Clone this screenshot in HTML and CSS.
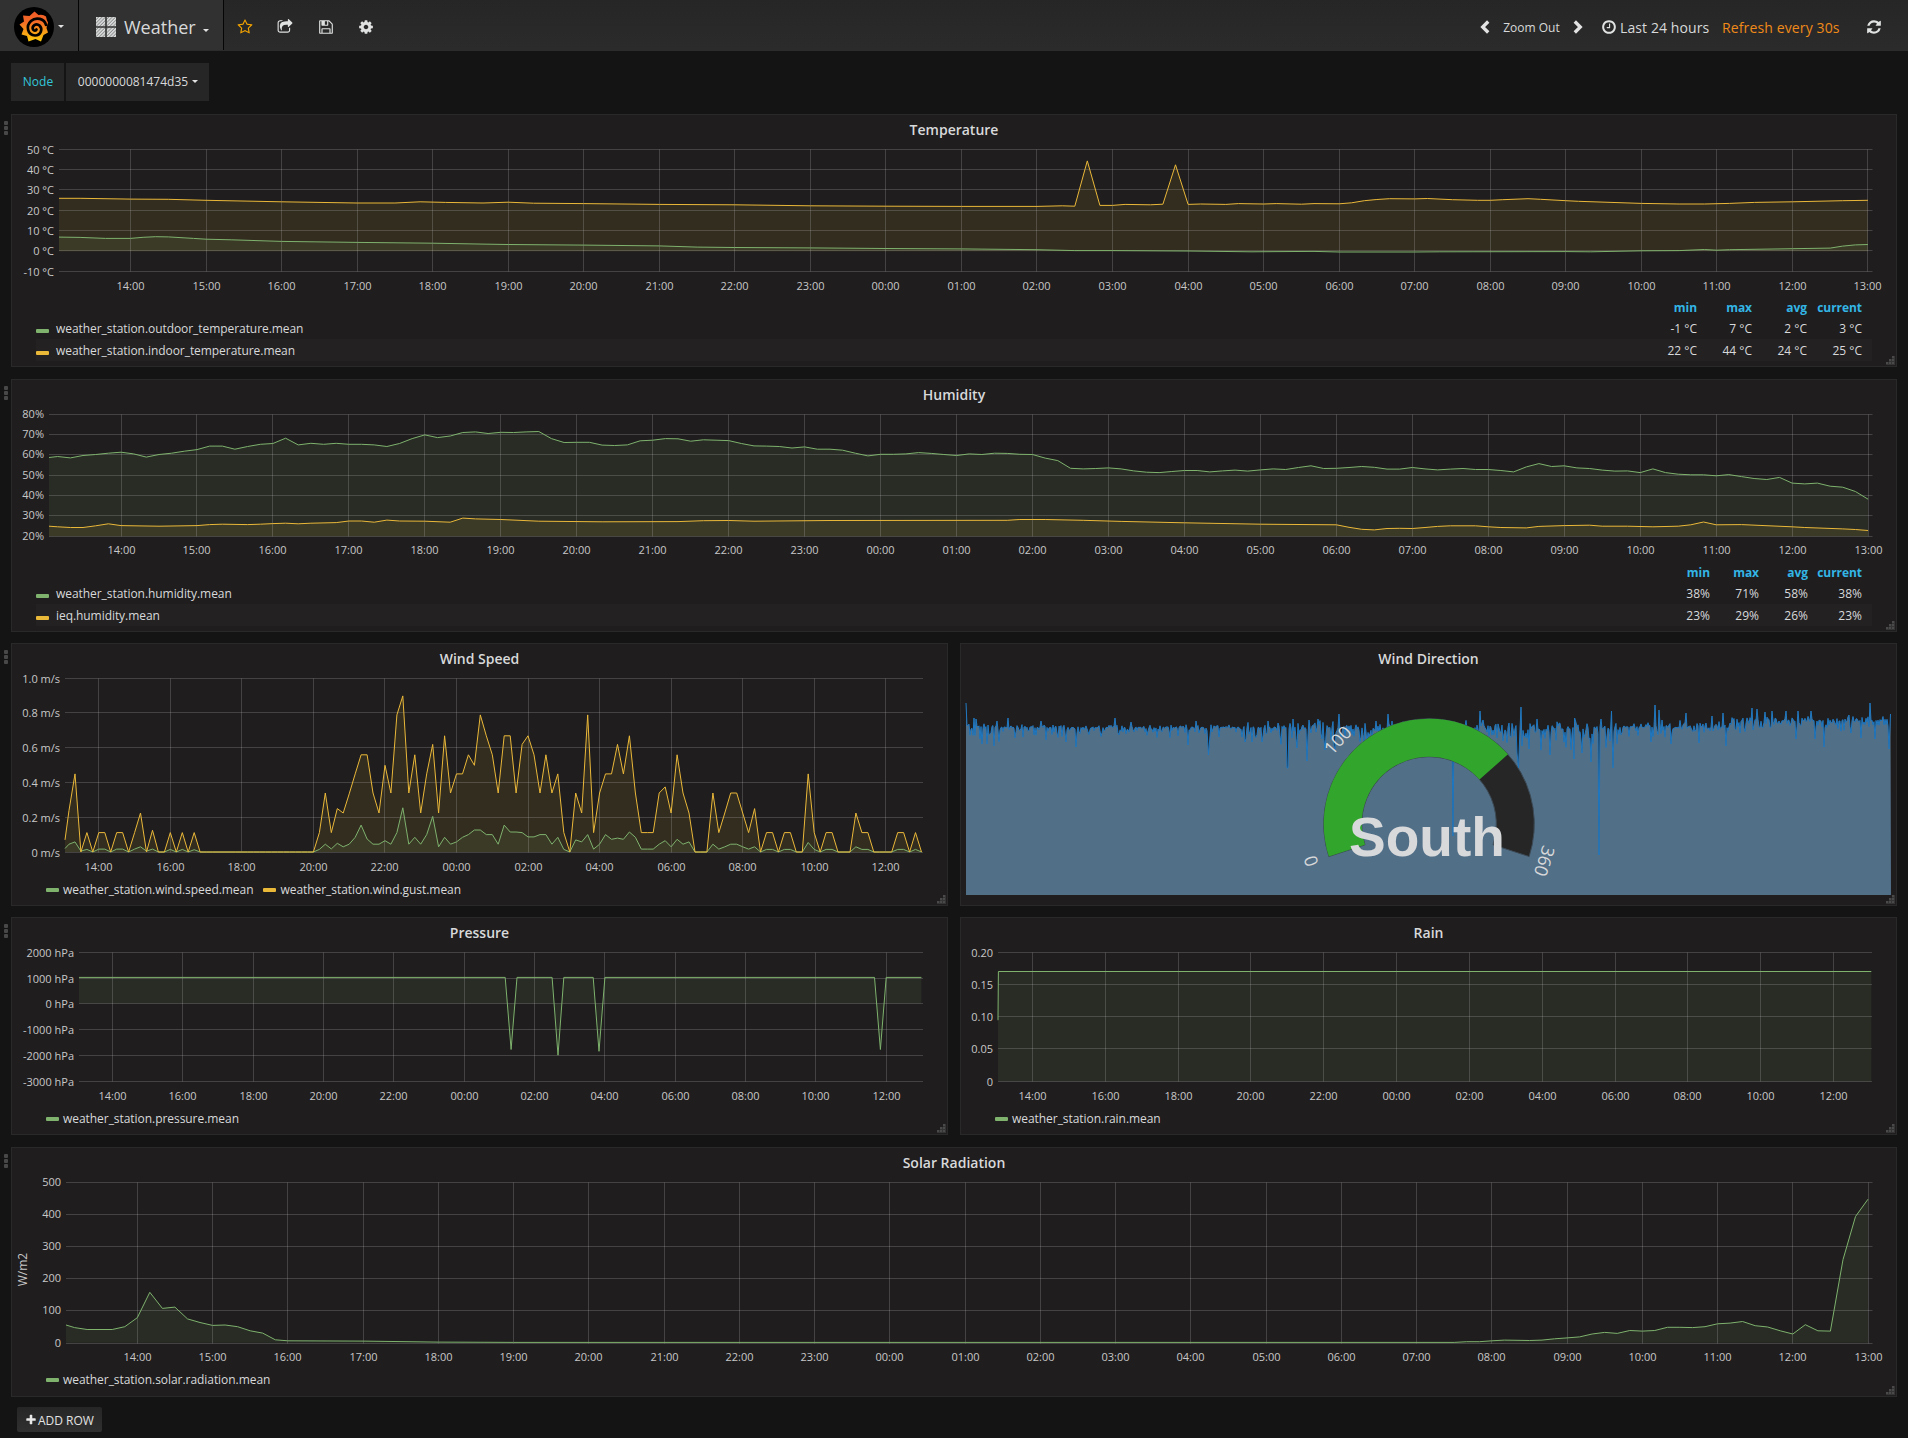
FILE: index.html
```html
<!DOCTYPE html>
<html lang="en">
<head>
<meta charset="utf-8">
<title>Grafana - Weather</title>
<link rel="stylesheet" href="styles.css">
</head>
<body>
<header class="navbar">
  <div class="brand">
    <svg class="logo" width="40" height="40" viewBox="0 0 40 40">
      <defs><linearGradient id="flame" x1="0" y1="0" x2="0" y2="1"><stop offset="0" stop-color="#f05a28"/><stop offset=".35" stop-color="#f26b26"/><stop offset="1" stop-color="#fbca0a"/></linearGradient></defs>
      <circle cx="20" cy="20" r="20" fill="#000"/>
      <path fill="url(#flame)" d="M20.500 4.500L24.500 8Q29 7 32 9.500Q32.500 13 34 15.500Q33 18.500 32.500 21L34 25.500L29.500 28L27 34.500L21.500 32L14.500 34.500L13 29L7.500 27.500L9.500 22L5.500 17.500L10 14.500L9 8.500L15.500 9Z"/>
      <path fill="none" stroke="#000" stroke-width="2.700" stroke-linecap="round" d="M32 18C30.500 11.500 22 9.500 17 14C11.500 19 13.500 28 21 28.500C27 28.500 29 22 25.500 18.500C22 15.500 17.500 19 19 22.500C20 24 22 24 22.500 22.500"/>
    </svg>
    <i class="caret"></i>
  </div>
  <div class="dash-picker">
    <svg width="20" height="20" viewBox="0 0 20 20">
      <defs><pattern id="hatch" width="2.400" height="2.400" patternUnits="userSpaceOnUse" patternTransform="rotate(45)"><rect width="2.400" height="2.400" fill="#8d8f90"/><rect width="1.400" height="2.400" fill="#dfe0e0"/></pattern></defs>
      <path fill="url(#hatch)" d="M0 0h9.200v9.200H0zM10.800 0H20v9.200h-9.200zM0 10.800h9.200V20H0zM10.800 10.800H20V20h-9.200z"/>
    </svg>
    <span class="dash-name">Weather</span><i class="caret"></i>
  </div>
  <nav class="tools">
    <svg class="star" viewBox="0 0 1792 1792"><path d="M1201 1004l306-297-422-62-189-382-189 382-422 62 306 297-73 421 378-199 377 199zm527-357q0 22-26 48l-363 354 86 500q1 7 1 20 0 50-41 50-19 0-40-12l-449-236-449 236q-22 12-40 12-21 0-31.500-14.500t-10.500-35.500q0-6 2-20l86-500-364-354q-25-27-25-48 0-37 56-46l502-73 225-455q19-41 49-41t49 41l225 455 502 73q56 9 56 46z"/></svg>
    <svg viewBox="0 0 1792 1792"><path d="M1472 989v259q0 119-84.500 203.500t-203.500 84.500h-832q-119 0-203.500-84.500t-84.500-203.500v-832q0-119 84.500-203.500t203.500-84.500h255q13 0 22.500 9.500t9.500 22.500q0 27-26 32-77 26-133 60-10 4-16 4h-112q-66 0-113 47t-47 113v832q0 66 47 113t113 47h832q66 0 113-47t47-113v-214q0-19 18-29 28-13 54-37 16-16 35-8 21 9 21 29zm237-496l-384 384q-18 19-45 19-12 0-25-5-39-17-39-59v-192h-160q-323 0-438 131-119 137-74 473 3 23-20 34-8 2-12 2-16 0-26-13-10-14-21-31t-39.500-68.500-49.500-99.500-38.500-114-17.500-122q0-49 3.500-91t14-90 28-88 47-81.500 68.500-74 94.500-61.500 124.500-48.500 159.500-30.500 196.500-11h160v-192q0-42 39-59 13-5 25-5 26 0 45 19l384 384q19 19 19 45t-19 45z"/></svg>
    <svg viewBox="0 0 1792 1792"><path d="M512 1536h768v-384h-768v384zm896 0h128v-896q0-14-10-38.500t-20-34.500l-281-281q-10-10-34-20t-39-10v416q0 40-28 68t-68 28h-576q-40 0-68-28t-28-68v-416h-128v1280h128v-416q0-40 28-68t68-28h832q40 0 68 28t28 68v416zm-384-928v-320q0-13-9.500-22.500t-22.500-9.500h-192q-13 0-22.500 9.500t-9.500 22.500v320q0 13 9.500 22.500t22.500 9.500h192q13 0 22.500-9.500t9.500-22.500zm640 32v928q0 40-28 68t-68 28h-1344q-40 0-68-28t-28-68v-1344q0-40 28-68t68-28h928q40 0 88 20t76 48l280 280q28 28 48 76t20 88z"/></svg>
    <svg viewBox="0 0 1792 1792"><path d="M1152 896q0-106-75-181t-181-75-181 75-75 181 75 181 181 75 181-75 75-181zm512-109v222q0 12-8 23t-20 13l-185 28q-19 54-39 91 35 50 107 138 10 12 10 25t-9 23q-27 37-99 108t-94 71q-12 0-26-9l-138-108q-44 23-91 38-16 136-29 186-7 28-36 28h-222q-14 0-24.500-8.500t-11.500-21.500l-28-184q-49-16-90-37l-141 107q-10 9-25 9-14 0-25-11-126-114-165-168-7-10-7-23 0-12 8-23 15-21 51-66.500t54-70.500q-27-50-41-99l-183-27q-13-2-21-12.500t-8-23.500v-222q0-12 8-23t19-13l186-28q14-46 39-92-40-57-107-138-10-12-10-24 0-10 9-23 26-36 98.500-107.500t94.500-71.500q13 0 26 10l138 107q44-23 91-38 16-136 29-186 7-28 36-28h222q14 0 24.500 8.500t11.500 21.500l28 184q49 16 90 37l142-107q9-9 24-9 13 0 25 10 129 119 165 170 7 8 7 22 0 12-8 23-15 21-51 66.500t-54 70.500q26 50 41 98l183 28q13 2 21 12.500t8 23.500z"/></svg>
  </nav>
  <div class="timenav">
    <svg class="chev" viewBox="0 0 10 14"><path d="M8.200 1.500L2.700 7l5.500 5.500"/></svg>
    <span class="zoom-out">Zoom Out</span>
    <svg class="chev" viewBox="0 0 10 14"><path d="M1.800 1.500L7.300 7l-5.500 5.500"/></svg>
    <svg class="clock" viewBox="0 0 1792 1792"><path d="M1024 544v448q0 14-9 23t-23 9h-320q-14 0-23-9t-9-23v-64q0-14 9-23t23-9h224v-352q0-14 9-23t23-9h64q14 0 23 9t9 23zm416 352q0-148-73-273t-198-198-273-73-273 73-198 198-73 273 73 273 198 198 273 73 273-73 198-198 73-273zm224 0q0 209-103 385.500t-279.500 279.500-385.500 103-385.500-103-279.500-279.500-103-385.500 103-385.500 279.500-279.500 385.500-103 385.500 103 279.500 279.500 103 385.500z"/></svg>
    <span class="range">Last 24 hours</span>
    <span class="refresh-every">Refresh every 30s</span>
    <svg class="refresh" viewBox="0 0 1792 1792"><path d="M1639 1056q0 5-1 7-64 268-268 434.500t-478 166.500q-146 0-282.500-55t-243.500-157l-129 129q-19 19-45 19t-45-19-19-45v-448q0-26 19-45t45-19h448q26 0 45 19t19 45-19 45l-137 137q71 66 161 102t187 36q134 0 250-65t186-179q11-17 53-117 8-23 30-23h192q13 0 22.500 9.500t9.500 22.500zm25-800v448q0 26-19 45t-45 19h-448q-26 0-45-19t-19-45 19-45l138-138q-148-137-349-137-134 0-250 65t-186 179q-11 17-53 117-8 23-30 23h-199q-13 0-22.500-9.500t-9.500-22.500v-7q65-268 270-434.500t480-166.500q146 0 284 55.500t245 156.500l130-129q19-19 45-19t45 19 19 45z"/></svg>
  </div>
</header>

<div class="submenu">
  <span class="var-label">Node</span>
  <span class="var-value">0000000081474d35<i class="caret"></i></span>
</div>

<main class="rows">
  <div class="row row-table">
    <span class="handle"><i></i><i></i><i></i></span>
    <section class="panel">
      <h2>Temperature</h2>
      <svg class="chart" id="temperature" viewBox="12 143 1884 152"></svg>
      <div class="table temp">
        <div class="tr head"><span></span><span>min</span><span>max</span><span>avg</span><span>current</span></div>
        <div class="tr"><span class="name"><i class="sw green"></i>weather_station.outdoor_temperature.mean</span><span>-1 °C</span><span>7 °C</span><span>2 °C</span><span>3 °C</span></div>
        <div class="tr odd"><span class="name"><i class="sw yellow"></i>weather_station.indoor_temperature.mean</span><span>22 °C</span><span>44 °C</span><span>24 °C</span><span>25 °C</span></div>
      </div>
    </section>
  </div>

  <div class="row row-table">
    <span class="handle"><i></i><i></i><i></i></span>
    <section class="panel">
      <h2>Humidity</h2>
      <svg class="chart" id="humidity" viewBox="12 408 1884 152"></svg>
      <div class="table hum">
        <div class="tr head"><span></span><span>min</span><span>max</span><span>avg</span><span>current</span></div>
        <div class="tr"><span class="name"><i class="sw green"></i>weather_station.humidity.mean</span><span>38%</span><span>71%</span><span>58%</span><span>38%</span></div>
        <div class="tr odd"><span class="name"><i class="sw yellow"></i>ieq.humidity.mean</span><span>23%</span><span>29%</span><span>26%</span><span>23%</span></div>
      </div>
    </section>
  </div>

  <div class="row row-wind">
    <span class="handle"><i></i><i></i><i></i></span>
    <section class="panel">
      <h2>Wind Speed</h2>
      <svg class="chart" id="wind" viewBox="12 672 935 207"></svg>
      <div class="legend"><span><i class="sw green"></i>weather_station.wind.speed.mean</span><span><i class="sw yellow"></i>weather_station.wind.gust.mean</span></div>
    </section>
    <section class="panel">
      <h2>Wind Direction</h2>
      <svg class="chart" id="direction" viewBox="961 672 935 233"></svg>
    </section>
  </div>

  <div class="row row-pressure">
    <span class="handle"><i></i><i></i><i></i></span>
    <section class="panel">
      <h2>Pressure</h2>
      <svg class="chart" id="pressure" viewBox="12 946 935 162"></svg>
      <div class="legend"><span><i class="sw green"></i>weather_station.pressure.mean</span></div>
    </section>
    <section class="panel">
      <h2>Rain</h2>
      <svg class="chart" id="rain" viewBox="961 946 935 162"></svg>
      <div class="legend"><span><i class="sw green"></i>weather_station.rain.mean</span></div>
    </section>
  </div>

  <div class="row row-solar">
    <span class="handle"><i></i><i></i><i></i></span>
    <section class="panel">
      <h2>Solar Radiation</h2>
      <svg class="chart" id="solar" viewBox="12 1176 1884 193"></svg>
      <div class="legend"><span><i class="sw green"></i>weather_station.solar.radiation.mean</span></div>
    </section>
  </div>
</main>

<button class="add-row"><svg viewBox="0 0 1792 1792"><path d="M1600 736v192q0 40-28 68t-68 28h-416v416q0 40-28 68t-68 28h-192q-40 0-68-28t-28-68v-416h-416q-40 0-68-28t-28-68v-192q0-40 28-68t68-28h416v-416q0-40 28-68t68-28h192q40 0 68 28t28 68v416h416q40 0 68 28t28 68z"/></svg>ADD ROW</button>
<script src="charts.js"></script>
</body>
</html>
```
FILE: styles.css
```css
* { box-sizing: border-box; }
body {
  margin: 0;
  width: 1908px;
  height: 1438px;
  overflow: hidden;
  background: #141414;
  color: #d8d9da;
  font-family: "Open Sans", "Noto Sans", sans-serif;
  font-size: 12px;
}
span { white-space: nowrap; }

/* top navigation */
.navbar {
  display: flex;
  height: 51px;
  background: linear-gradient(#262626, #2b2b2b);
  border-bottom: 1px solid #2c2c2c;
}
.brand, .dash-picker {
  display: flex;
  align-items: center;
  background: #313131;
  border-right: 1px solid #050505;
}
.brand { width: 79px; padding: 2px 0 0 14px; height: 51px; }
.brand .caret { margin-left: 4px; }
.dash-picker { width: 145px; padding: 4px 0 0 17px; height: 50px; }
.dash-name { font-size: 18px; line-height: 24px; margin-left: 8px; width: 71px; }
.dash-picker .caret { margin: 6px 0 0 8px; }
.caret {
  display: inline-block;
  width: 0;
  border: 3px solid transparent;
  border-top-color: #e3e3e3;
  border-bottom: 0;
}
.tools { display: flex; align-items: center; gap: 24.500px; padding: 3px 0 0 12.500px; }
.tools svg, .clock, .refresh { width: 16px; height: 16px; fill: #e0e1e1; }
.tools .star { width: 16px; fill: #f5a400; }
.timenav { display: flex; align-items: center; margin-left: auto; padding: 4px 26px 0 0; }
.chev { width: 10px; height: 14px; fill: none; stroke: #e3e3e3; stroke-width: 3.300; }
.zoom-out { width: 83px; text-align: center; font-size: 12px; }
.clock { margin-left: 18px; }
.range { margin-left: 3px; width: 91px; font-size: 14px; letter-spacing: .1px; }
.refresh-every { margin-left: 11px; width: 120px; font-size: 14px; letter-spacing: .13px; color: #f08a18; }
.refresh { margin-left: 24px; }

/* template variables */
.submenu { display: flex; gap: 2px; margin: 12px 0 13px 11px; height: 38px; }
.var-label, .var-value {
  display: flex;
  align-items: center;
  justify-content: center;
  padding: 0 0 2px 1px;
  background: #262626;
}
.var-label { width: 53px; color: #33c6da; }
.var-value { width: 143px; }
.var-value .caret { margin-left: 4px; }

/* rows and panels */
.row { position: relative; display: flex; gap: 12px; margin: 0 11px 0 11px; }
.row-table { height: 253px; margin-bottom: 12px; }
.row-table + .row-table { margin-bottom: 11px; }
.row-wind { height: 263px; margin-bottom: 11px; }
.row-pressure { height: 218px; margin-bottom: 12px; }
.row-solar { height: 250px; }
.handle { position: absolute; left: -7px; top: 7px; display: grid; gap: 1px; }
.handle i { width: 4px; height: 4px; border-radius: 1px; background: #484848; }
.panel {
  position: relative;
  flex: 1;
  display: flex;
  flex-direction: column;
  background: #1f1d1e;
  border: 1px solid #292929;
}
.panel::after {
  content: "";
  position: absolute;
  right: 1px;
  bottom: 1px;
  width: 9px;
  height: 9px;
  background: linear-gradient(#4a4a4a88, #4a4a4a88), repeating-linear-gradient(#0000 0 2px, #1f1d1e 2px 3px), repeating-linear-gradient(90deg, #4a4a4a 0 2px, #1f1d1e 2px 3px);
  clip-path: polygon(6px 0, 9px 0, 9px 9px, 0 9px, 0 6px, 3px 6px, 3px 3px, 6px 3px);
}
h2 {
  margin: 0;
  height: 28px;
  padding-top: 1px;
  line-height: 28px;
  font-size: 14px;
  font-weight: 600;
  text-align: center;
}
.chart { display: block; width: 100%; flex: none; overflow: visible; }
.chart text { font-size: 11px; fill: #c8c8c8; }
.chart .title { font-size: 12px; }
.chart .limit { font-size: 18px; fill: #d8d9da; }
.chart .reading { font: bold 55px "Liberation Sans", Arial, sans-serif; fill: #d8d9da; }

/* legends */
.sw { display: inline-block; width: 13px; height: 4px; border-radius: 1px; }
.green { background: #7eb26d; }
.yellow { background: #eab839; }
.legend { display: flex; gap: 10px; padding-left: 34px; line-height: 22px; letter-spacing: -.05px; }
.legend span { display: flex; align-items: center; gap: 4px; }
.table { margin: 0 24px; }
.tr { display: grid; height: 22px; line-height: 24px; text-align: right; padding-right: 10px; }
.temp .tr { grid-template-columns: 1fr 55px 55px 55px 55px; }
.hum .tr { grid-template-columns: 1fr 55px 49px 49px 54px; }
.odd { background: #232122; }
.head { color: #33b5e5; font-weight: 700; line-height: 25px; letter-spacing: -.05px; }
.name { display: flex; align-items: center; gap: 7px; letter-spacing: -.06px; }
.name .sw { margin-top: 3px; }

.add-row {
  display: flex;
  align-items: center;
  gap: 1px;
  margin: 10px 0 0 17px;
  width: 85px;
  height: 25px;
  padding: 1px 0 0 8px;
  border: 0;
  border-radius: 2px;
  background: linear-gradient(#262626, #303030);
  color: #e3e3e3;
  font: 12px "Open Sans", sans-serif;
  white-space: nowrap;
}
.add-row svg { width: 12px; height: 12px; fill: #e8e8e8; flex: none; }
```
FILE: charts.js
```js
const GREEN = '#7EB26D', YELLOW = '#EAB839';

// Each chart: x0/x1 plot edges, x14 = position of 14:00, hour = px per hour,
// yTop/yBottom with the values they stand for. Sample k is taken k*10 minutes after 13:00.
function draw(id, c) {
  const X = k => Math.max(c.x0, c.x14 + (k - 6) * c.hour / 6);
  const Y = v => c.yTop + (c.max - v) * (c.yBottom - c.yTop) / (c.max - c.min);
  let out = '';
  for (const s of c.series) {
    const pts = s.data.map((d, i) => Array.isArray(d) ? d : [i, d]);
    const line = pts.map(p => X(p[0]).toFixed(1) + ',' + Y(p[1]).toFixed(1)).join(' ');
    const base = Y(Math.max(0, c.min)).toFixed(1);
    const last = X(pts[pts.length - 1][0]).toFixed(1);
    s.line = line;
    out += `<polygon points="${c.x0},${base} ${line} ${last},${base}" fill="${s.color}" fill-opacity=".1"/>`;
  }
  const grid = [];
  c.labels.forEach((t, i) => {
    const y = c.rows[i];
    grid.push(`M${c.x0} ${y}H${c.x1}`);
    out += `<text x="${c.x0 - 5}" y="${y + (c.labelDy || 4)}" text-anchor="end">${t}</text>`;
  });
  for (let h = 0; h <= 23; h += c.step) {
    const x = Math.floor(c.x14 + h * c.hour) + .5;
    grid.push(`M${x} ${c.rows[0]}V${c.rows[c.rows.length - 1]}`);
    out += `<text x="${x}" y="${c.tickY}" text-anchor="middle">${String((14 + h) % 24).padStart(2, '0')}:00</text>`;
  }
  out += `<path d="${grid.join('')}" stroke="#c8c8c8" stroke-opacity=".22" fill="none"/>`;
  for (const s of c.series) out += `<polyline points="${s.line}" fill="none" stroke="${s.color}" stroke-width="1"/>`;
  document.getElementById(id).innerHTML = out + (c.extra || '');
}

draw('temperature', {
  x0: 59, x1: 1872.5, x14: 130.5, hour: 75.54, step: 1, yTop: 149.5, yBottom: 271.5, max: 50, min: -10, tickY: 290,
  rows: [149.5, 169.5, 189.5, 210.5, 230.5, 250.5, 271.5],
  labels: ['50 °C', '40 °C', '30 °C', '20 °C', '10 °C', '0 °C', '-10 °C'],
  series: [
    { color: GREEN, data: [[0, 6.9], [2, 6.75], [4, 6.3], [6, 6.3], [7, 6.8], [8, 7.1], [9, 7], [11, 6.3], [12, 5.9], [14, 5.6], [18, 4.8], [24, 4.3], [30, 3.9], [34, 3.5], [36, 3.3], [42, 3], [48, 2.6], [51, 2], [54, 1.8], [60, 1.6], [66, 1.3], [72, 1.1], [78, .7], [81, .3], [84, .3], [90, .1], [95, -.3], [100, -.1], [102, -.4], [108, -.4], [110, -.3], [120, -.2], [122, -.3], [126, .2], [129, .3], [131, .8], [132, .5], [133, .7], [138, 1.2], [141, 1.5], [142, 2.5], [143, 3.1], [144, 3.3]] },
    { color: YELLOW, data: [[0, 26], [2, 26], [6, 25.6], [9, 25.5], [12, 25], [18, 24.3], [24, 23.7], [27, 23.7], [29, 24.3], [31, 24], [34, 23.7], [36, 24.1], [38, 23.6], [42, 23.4], [48, 23], [54, 22.8], [60, 22.3], [66, 22.1], [72, 22], [78, 22], [80, 22.3], [81, 22.1], [82, 44.4], [83, 22.5], [84, 22.5], [85, 23], [87, 22.8], [88, 23.1], [89, 42.5], [90, 23], [91, 23.2], [93, 23], [94, 23.4], [96, 23.2], [97, 23.4], [99, 23.1], [100, 23.4], [102, 23.3], [103, 23.8], [104, 24.8], [105, 25.4], [106, 25.8], [108, 25.7], [109, 25.9], [111, 25.3], [113, 25], [114, 25], [115, 25.3], [117, 25.8], [118, 25.5], [120, 24.8], [121, 24.5], [126, 23.5], [129, 23.2], [131, 23.2], [133, 23.5], [135, 24], [138, 24.3], [142, 24.8], [144, 25]] }
  ]
});

draw('humidity', {
  x0: 49, x1: 1872.5, x14: 121, hour: 75.96, step: 1, yTop: 414.2, yBottom: 536.2, max: 80, min: 20, tickY: 554, labelDy: 3.5,
  rows: [414.5, 434.5, 454.5, 475.5, 495.5, 515.5, 536.5],
  labels: ['80%', '70%', '60%', '50%', '40%', '30%', '20%'],
  series: [
    { color: GREEN, data: [58.7, 59.2, 58.5, 59.7, 60.2, 60.8, 61.3, 60.5, 58.9, 60.2, 60.8, 61.8, 62.6, 64.3, 64.3, 62.8, 64.1, 65.2, 65.6, 68.2, 64.9, 65.7, 65.2, 65.7, 65.2, 65.2, 64.9, 64.1, 65.6, 68, 69.8, 68.5, 69.3, 71, 71.3, 70.5, 71.1, 71, 71.3, 71.5, 68, 66.1, 66.2, 66.2, 64.8, 64.6, 64.9, 66.9, 67.2, 68, 67.9, 66.7, 67.4, 67.2, 67, 65.6, 64.4, 64.3, 64.1, 63.4, 63.9, 62.8, 62.8, 62.3, 60.8, 59.5, 60.3, 60.3, 60.5, 61.1, 60.7, 60.2, 59.7, 60.5, 60.2, 60.8, 60.7, 60.3, 60.2, 58.4, 57.2, 53.4, 53.1, 53.3, 53.6, 53.1, 52.1, 51.5, 51.3, 51.8, 52.3, 52.3, 51.6, 52.1, 52.5, 52, 52.6, 53.1, 52.8, 53.8, 54.6, 53.3, 53.4, 53.8, 54.3, 53.9, 53, 53, 53.8, 53.1, 52.6, 53, 53.3, 52.8, 52.8, 52.3, 51.6, 54.1, 55.7, 54.3, 54.6, 53.6, 53.3, 52.5, 52, 52.1, 51.3, 53.1, 51.3, 50.5, 50.2, 50.2, 49.7, 50.3, 49.3, 48.4, 47.9, 48.9, 46.1, 45.7, 46.1, 44.6, 44.1, 42, 38.2] },
    { color: YELLOW, data: [[0, 24.9], [1, 24.6], [2, 24.3], [3, 24.3], [4, 25.1], [5, 26.1], [6, 25.2], [9, 24.9], [12, 25.2], [13, 25.7], [14, 25.9], [16, 25.7], [17, 25.9], [18, 26.2], [19, 26.4], [20, 26.1], [21, 26.4], [23, 26.7], [24, 27.5], [25, 27.5], [26, 26.9], [27, 27.9], [28, 27.5], [30, 27.4], [32, 26.9], [33, 28.9], [34, 28.5], [36, 28.2], [39, 27.4], [44, 27.1], [50, 27.2], [52, 27.6], [54, 27.7], [56, 27.4], [62, 27.7], [76, 27.8], [77, 28.2], [79, 28.2], [82, 27.8], [85, 27.3], [90, 26.6], [96, 25.9], [102, 25.6], [103, 24.4], [104, 23.4], [105, 23.1], [106, 23.8], [107, 23.9], [108, 23.8], [109, 24.3], [110, 24.8], [111, 25.1], [113, 25.1], [114, 24.6], [115, 24.3], [117, 24.1], [118, 24.8], [120, 25.2], [122, 25.4], [123, 24.9], [125, 24.9], [127, 24.6], [129, 24.9], [130, 25.6], [131, 27], [132, 25.6], [134, 25.7], [138, 24.6], [139, 24.3], [142, 23.6], [143, 23.3], [144, 22.8]] }
  ]
});

const calm = Array(18).fill(0);
draw('wind', {
  x0: 65, x1: 923, x14: 98.8, hour: 35.77, step: 2, yTop: 678.5, yBottom: 852, max: 1, min: 0, tickY: 871,
  rows: [678.5, 712.5, 747.5, 782.5, 817.5, 852.5],
  labels: ['1.0 m/s', '0.8 m/s', '0.6 m/s', '0.4 m/s', '0.2 m/s', '0 m/s'],
  series: [
    { color: GREEN, data: [.02, .045, .058, .005, .015, 0, .017, .017, 0, .017, .017, 0, .017, .03, .005, .017, 0, 0, .015, 0, .015, 0, .013, 0, ...calm, 0, .015, .045, .018, .05, .03, .045, .085, .155, .075, .045, .045, .065, .045, .112, .255, .045, .085, .045, .1, .205, .03, .085, .045, .058, .085, .1, .127, .127, .1, .1, .045, .155, .115, .115, .112, .087, .087, .1, .1, .045, .085, .015, 0, .07, .058, .1, .017, .045, .1, .073, .08, .073, .115, .085, .017, .017, .017, .045, .065, .03, .073, .045, .058, 0, 0, 0, .045, .017, .03, .045, .045, .03, .017, .03, 0, .015, .015, 0, .015, .015, 0, 0, .055, .015, 0, .015, .015, 0, 0, 0, .03, .015, .015, 0, 0, 0, 0, .015, .015, 0, .015, 0] },
    { color: YELLOW, data: [.07, .24, .45, 0, .112, 0, .112, .112, 0, .112, .112, 0, .112, .225, 0, .125, 0, 0, .112, 0, .112, 0, .112, 0, ...calm, 0, .112, .34, .112, .25, .225, .335, .45, .56, .56, .34, .225, .5, .34, .79, .9, .34, .56, .225, .45, .62, .225, .67, .34, .45, .45, .56, .5, .79, .67, .56, .34, .67, .67, .34, .62, .67, .56, .34, .56, .34, .45, .112, 0, .34, .225, .79, .112, .34, .45, .45, .62, .45, .67, .34, .112, .112, .112, .34, .375, .225, .56, .34, .225, 0, 0, 0, .34, .112, .225, .34, .34, .225, .112, .25, 0, .112, .112, 0, .112, .112, 0, 0, .45, .112, 0, .112, .112, 0, 0, 0, .225, .112, .112, 0, 0, 0, 0, .112, .112, 0, .112, 0] }
  ]
});

draw('pressure', {
  x0: 79, x1: 923, x14: 112.5, hour: 35.17, step: 2, yTop: 952, yBottom: 1081, max: 2000, min: -3000, tickY: 1100,
  rows: [952.5, 978.5, 1003.5, 1029.5, 1055.5, 1081.5],
  labels: ['2000 hPa', '1000 hPa', '0 hPa', '-1000 hPa', '-2000 hPa', '-3000 hPa'],
  series: [{ color: GREEN, data: [[0, 1015], [73, 1015], [74, -1780], [75, 1015], [81, 1015], [82, -2000], [83, 1015], [88, 1015], [89, -1850], [90, 1015], [136, 1015], [137, -1780], [138, 1015], [144, 1015]] }]
});

draw('rain', {
  x0: 998, x1: 1872, x14: 1032.4, hour: 36.42, step: 2, yTop: 952.5, yBottom: 1081.5, max: .2, min: 0, tickY: 1100,
  rows: [952.5, 984.5, 1016.5, 1048.5, 1081.5],
  labels: ['0.20', '0.15', '0.10', '0.05', '0'],
  series: [{ color: GREEN, data: [[0, .095], [.4, .1705], [144.2, .1705]] }]
});

draw('solar', {
  x0: 66, x1: 1872.5, x14: 137.3, hour: 75.25, step: 1, yTop: 1182.2, yBottom: 1342.7, max: 500, min: 0, tickY: 1361, labelDy: 3.5,
  rows: [1182.5, 1214.5, 1246.5, 1278.5, 1310.5, 1343.5],
  labels: ['500', '400', '300', '200', '100', '0'],
  series: [{ color: GREEN, data: [[0, 55], [1, 47], [2, 41], [4, 41], [5, 50], [6, 78], [7, 157], [8, 107], [9, 111], [10, 74], [11, 63], [12, 54], [13, 55], [14, 50], [15, 37], [16, 30], [17, 9], [18, 6], [24, 5], [30, 2], [36, 1], [111, 1], [112, 3], [113, 3], [114, 6], [115, 8], [117, 7], [118, 8], [119, 12], [120, 15], [121, 18], [122, 27], [123, 32], [124, 29], [125, 38], [126, 36], [127, 38], [128, 48], [129, 48], [130, 47], [131, 50], [132, 59], [133, 61], [134, 66], [135, 53], [136, 49], [137, 37], [138, 27], [139, 56], [140, 37], [141, 36], [142, 259], [143, 393], [144, 447]] }],
  extra: '<text class="title" transform="translate(27 1269.500) rotate(-90)" text-anchor="middle">W/m2</text>'
});

// Wind direction: noisy sparkline behind a gauge
(function () {
  const gusts = [[966, 703], [974, 718], [976, 719], [982, 744], [987, 744], [994, 746], [997, 721], [1008, 718], [1041, 721], [1046, 740], [1066, 742], [1076, 747], [1115, 718], [1131, 722], [1188, 745], [1196, 721], [1208.5, 755], [1245, 742], [1252, 742], [1268, 721], [1287, 768], [1288, 768], [1293, 719], [1297, 748], [1307, 761], [1309, 720], [1318, 719], [1325, 750], [1339, 714], [1335, 750], [1376, 721], [1388, 714], [1392, 721], [1453, 836], [1480, 711], [1483, 720], [1517, 753], [1518.5, 768], [1521, 707], [1529, 749], [1537, 719], [1550, 755], [1571, 750], [1574, 759], [1574.6, 718], [1582, 753], [1591, 762], [1599, 855], [1601, 719], [1611.5, 711], [1613, 768], [1651, 742], [1655, 705], [1659, 710], [1671, 744], [1686, 713], [1699, 743], [1712, 716], [1723, 713], [1726, 746], [1752, 708], [1757, 709], [1765, 712], [1772, 711], [1786, 711], [1796, 739], [1798, 711], [1811, 711], [1815, 739], [1824, 747], [1849, 715], [1861, 738], [1870, 703], [1875, 739], [1889, 749], [1890.5, 714]];
  let seed = 7;
  const rnd = () => (seed = (seed * 16807) % 2147483647) / 2147483647;
  const pts = [];
  for (let x = 967; x < 1891; x += 1) {
    let mid = 727.5, up = 3, down = 12;
    if (x < 1000) { up = 6; down = 18; }
    if (x > 1240 && x < 1350) { up = 8; down = 20; }
    if (x >= 1350 && x < 1620) { mid = 729; up = 10; down = 22; }
    if (x >= 1620 && x < 1730) { mid = 727; up = 9; down = 12; }
    if (x >= 1730) { mid = 721; up = 7; down = 13; }
    const r = rnd();
    pts.push([x, r < .5 ? mid - up * rnd() * rnd() : mid + down * rnd() * rnd()]);
  }
  const line = pts.filter(p => !gusts.some(g => Math.abs(g[0] - p[0]) < .8)).concat(gusts)
    .sort((a, b) => a[0] - b[0]).map(p => p[0] + ',' + p[1].toFixed(1)).join(' ');
  const cx = 1429, cy = 824, R = 105.3, r = 67.3;
  const at = (rad, deg) => (cx + rad * Math.cos(deg * Math.PI / 180)).toFixed(2) + ' ' + (cy + rad * Math.sin(deg * Math.PI / 180)).toFixed(2);
  const arc = (a, b) => `M${at(R, a)}A${R} ${R} 0 ${b - a > 180 ? 1 : 0} 1 ${at(R, b)}L${at(r, b)}A${r} ${r} 0 ${b - a > 180 ? 1 : 0} 0 ${at(r, a)}Z`;
  document.getElementById('direction').innerHTML =
    `<polygon points="966,895 ${line} 1891,895" fill="#526f88"/>
     <polyline points="${line}" fill="none" stroke="#1f78c1" stroke-width="1"/>
     <path d="${arc(162, 378)}" fill="#262626" stroke="#3c4a55"/>
     <path d="${arc(162, 318.6)}" fill="#32a62c"/>
     <text class="limit" transform="translate(1311.500 861) rotate(-108)" text-anchor="middle" dy="6">0</text>
     <text class="limit" transform="translate(1338 740.500) rotate(-48)" text-anchor="middle" dy="6">100</text>
     <text class="limit" transform="translate(1544 861) rotate(108)" text-anchor="middle" dy="6">360</text>
     <text class="reading" x="1427" y="856" text-anchor="middle">South</text>`;
})();
```
